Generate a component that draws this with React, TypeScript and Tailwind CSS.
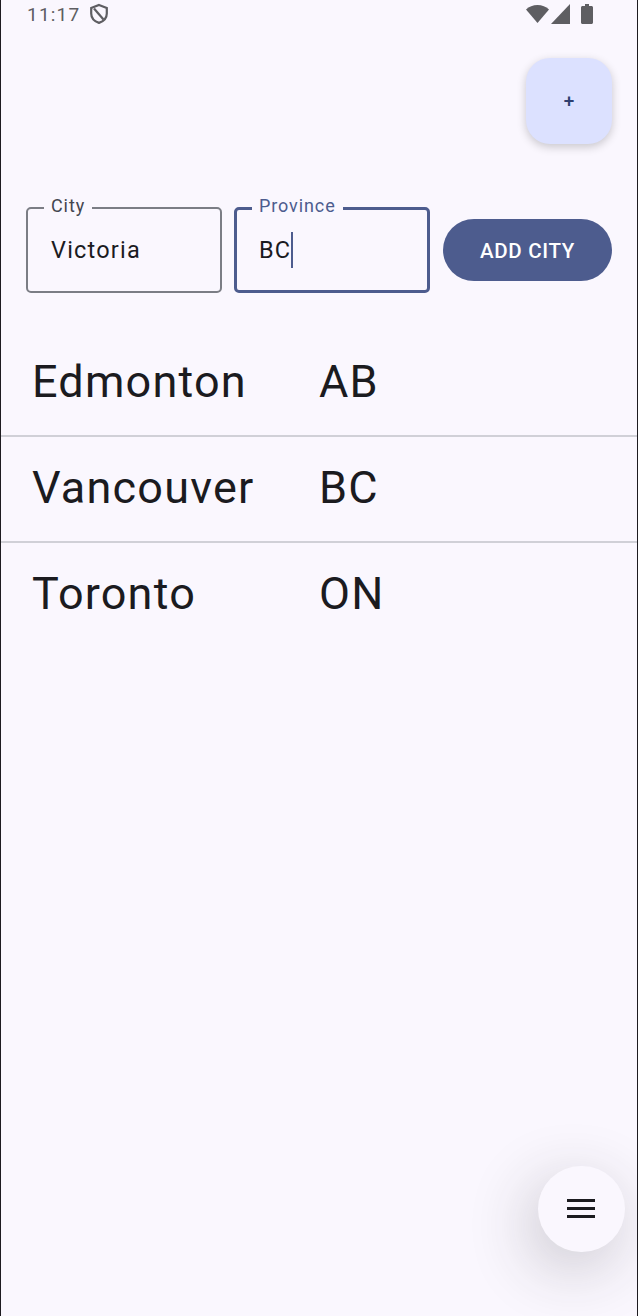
const rows = [
  { city: "Edmonton", province: "AB" },
  { city: "Vancouver", province: "BC" },
  { city: "Toronto", province: "ON" },
];

function StatusBar() {
  return (
    <div className="flex h-[28px] items-center justify-between pl-[26px] pr-[44px] text-[#5e5e62]">
      <div className="flex items-center gap-[9px]">
        <span className="pt-[1px] text-[19px] leading-[28px] tracking-[1.2px]">11:17</span>
        <svg width="20" height="22" viewBox="0 0 20 22" fill="none" stroke="currentColor" strokeWidth="2.200">
          <path d="M10 2l7.800 2.900v5.600c0 4.600-3.200 7.800-7.800 9.400-4.600-1.600-7.800-4.800-7.800-9.400V4.900z" />
          <path d="M5 5.500l9.500 11" />
        </svg>
      </div>
      <div className="flex items-center">
        <svg width="23" height="20" viewBox="0 0 23 20" fill="currentColor">
          <path d="M0 5.500C3 2.500 7 1 11.500 1S20 2.500 23 5.500L11.500 19z" />
        </svg>
        <svg width="19" height="20" viewBox="0 0 19 20" fill="currentColor" className="ml-[2px]">
          <path d="M19 0v20H0z" />
        </svg>
        <svg width="12" height="20" viewBox="0 0 12 20" fill="currentColor" className="ml-[11px]">
          <path d="M4 0h4v2h2.500c.8 0 1.500.7 1.500 1.500V18.500c0 .8-.7 1.500-1.500 1.500h-9C.7 20 0 19.300 0 18.500V3.500C0 2.700.7 2 1.500 2H4z" />
        </svg>
      </div>
    </div>
  );
}

function OutlinedField({
  label,
  value,
  focused,
}: {
  label: string;
  value: string;
  focused?: boolean;
}) {
  return (
    <div
      className={
        focused
          ? "relative flex h-[86px] w-[196px] items-center rounded-[5px] border-[3px] border-[#4d5c8e] pl-[22px]"
          : "relative flex h-[86px] w-[196px] items-center rounded-[5px] border-2 border-[#7b7d85] pl-[23px]"
      }
    >
      {/* label sits on the border and cuts it */}
      <span
        className={
          focused
            ? "absolute left-[15px] top-[-15px] bg-[#faf7fe] px-[7px] text-[18px] leading-[22px] tracking-[0.9px] text-[#4d5c8e]"
            : "absolute left-[16px] top-[-14px] bg-[#faf7fe] px-[7px] text-[18px] leading-[22px] tracking-[0.9px] text-[#44464f]"
        }
      >
        {label}
      </span>
      <span className="text-[23.500px] leading-[30px] tracking-[1.2px] text-[#1b1b1f]">{value}</span>
      {focused && <span className="h-[36px] w-[2px] bg-[#4d5c8e]" />}
    </div>
  );
}

function CityRow({ city, province, last }: { city: string; province: string; last?: boolean }) {
  return (
    <div
      className={
        last
          ? "flex h-[106px] items-center pb-[5px] pl-[31px] text-[#1b1b1f]"
          : "flex h-[106px] items-center border-b-2 border-[#d0d0d7] pb-[3px] pl-[31px] text-[#1b1b1f]"
      }
    >
      <span className="w-[287px] text-[45px] leading-[56px] tracking-[1.2px]">{city}</span>
      <span className="text-[45px] leading-[56px] tracking-[1.2px]">{province}</span>
    </div>
  );
}

export default function App() {
  return (
    <div className="flex h-[1316px] w-[638px] flex-col overflow-hidden border-x border-x-[#1d1b20] bg-[#faf7fe] font-['Roboto',sans-serif]">
      <StatusBar />

      <div className="flex justify-end pr-[25px] pt-[30px]">
        <button className="flex h-[86px] w-[86px] items-center justify-center rounded-[24px] bg-[#dce1ff] text-[19px] font-medium text-[#2f3f70] shadow-[0_3px_10px_rgba(0,0,0,0.2)]">
          +
        </button>
      </div>

      <div className="flex items-center pl-[25px] pr-[25px] pt-[63px]">
        <OutlinedField label="City" value="Victoria" />
        <div className="ml-[12px]">
          <OutlinedField label="Province" value="BC" focused />
        </div>
        <button className="ml-[13px] flex h-[62px] w-[169px] items-center justify-center rounded-full bg-[#4d5c8e] pt-[2px] text-[20.500px] font-medium tracking-[0.7px] text-white">
          ADD CITY
        </button>
      </div>

      <div className="mt-[38px]">
        {rows.map((row, i) => (
          <CityRow key={row.city} city={row.city} province={row.province} last={i === rows.length - 1} />
        ))}
      </div>

      <div className="mt-auto flex justify-end pb-[64px] pr-[12px]">
        <button className="flex h-[86px] w-[87px] items-center justify-center rounded-full bg-[#faf7fe] pr-[2px] shadow-[-8px_16px_64px_rgba(40,40,45,0.24)]">
          <svg width="28" height="20" viewBox="0 0 28 20" fill="#1b1b1f">
            <rect x="0" y="0" width="28" height="3" />
            <rect x="0" y="8" width="28" height="3" />
            <rect x="0" y="16" width="28" height="3" />
          </svg>
        </button>
      </div>
    </div>
  );
}
